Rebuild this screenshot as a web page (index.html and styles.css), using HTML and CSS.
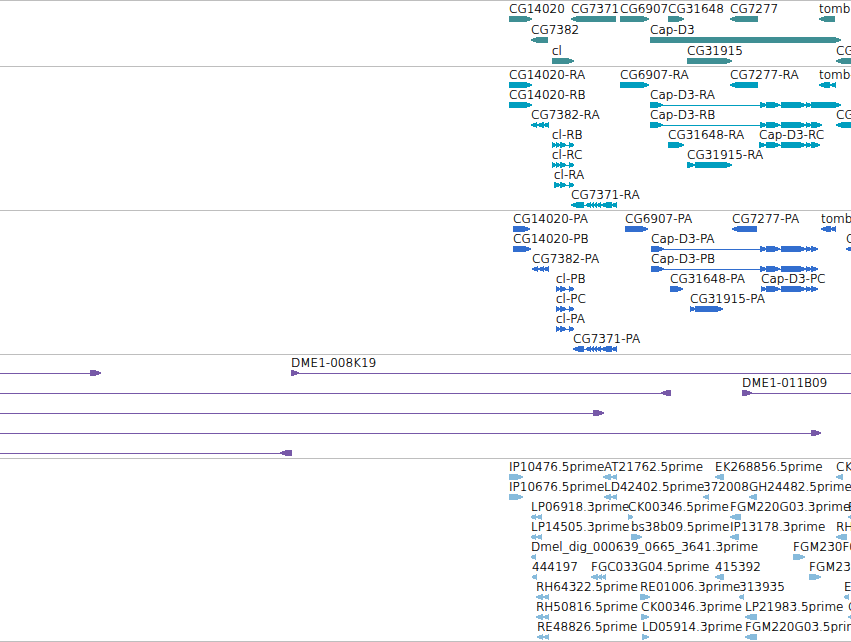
FILE: index.html
```html
<!DOCTYPE html>
<html lang="en">
<head>
    <meta charset="UTF-8">
    <meta name="viewport" content="width=device-width, initial-scale=1.0">
    <title>Genome tracks</title>
    <link rel="stylesheet" href="styles.css">
</head>
<body>
    <main class="browser">
        <section class="track genes" id="genes" aria-label="Genes"></section>
        <section class="track transcripts" id="transcripts" aria-label="Transcripts"></section>
        <section class="track proteins" id="proteins" aria-label="Proteins"></section>
        <section class="track clones" id="clones" aria-label="Clones"></section>
        <section class="track ests" id="ests" aria-label="ESTs"></section>
    </main>
    <script src="script.js"></script>
</body>
</html>
```
FILE: styles.css
```css
body {
    margin: 0;
    background-color: #fff;
    color: #000;
    font-family: "DejaVu Sans", "DejaVu Sans Light", Verdana, sans-serif;
    font-size: 12px;
    font-weight: 200;
    line-height: 14px;
    overflow: hidden;
}
.browser {
    overflow: hidden;
}
.track {
    border-top: 1px solid #bebebe;
    padding: 1px 0 2px;
}
.track:first-child {
    padding-bottom: 1px;
}
.track:last-child {
    padding-bottom: 1px;
    border-bottom: 1px solid #bebebe;
}
.row {
    position: relative;
    height: 20px;
}
.genes .row {
    height: 21px;
}
/* labels sit at their place on the sequence axis */
.label {
    position: absolute;
    top: 0;
    white-space: nowrap;
    text-shadow: 0 0 #000; /* darkens the thin strokes */
}
.glyphs {
    display: block;
    width: 100%;
    height: 20px;
    shape-rendering: crispEdges;
}
.genes {
    fill: #3f8f94;
}
.transcripts {
    fill: #009ebf;
}
.proteins {
    fill: #326ecf;
}
.clones {
    fill: #7759a8;
}
.ests {
    fill: #87bbdc;
}
```
FILE: script.js
```js
const SVG_NS = 'http://www.w3.org/2000/svg';
const TOP = 14;     // top of the glyphs in a row
const HEIGHT = 6;
const END = 2000;   // past the right edge of the view

// [label, start, strand, [[from, to], ...], line from, line to]
const capExons = [[766, 780], [781, 806], [806, 811]];
const cg7371Exons = [[586, 591], [591, 594], [594, 597], [597, 601], [601, 612], [612, 617]];

const tracks = {
    genes: [
        [
            ['CG14020', 509, '+', [[509, 532]]],
            ['CG7371', 571, '-', [[571, 616]]],
            ['CG6907', 620, '+', [[620, 649]]],
            ['CG31648', 668, '+', [[668, 684]]],
            ['CG7277', 730, '-', [[730, 758]]],
            ['tomb', 819, '-', [[819, 835]]]
        ],
        [
            ['CG7382', 531, '-', [[531, 548]]],
            ['Cap-D3', 650, '+', [[650, 841]]]
        ],
        [
            ['cl', 552, '+', [[552, 574]]],
            ['CG31915', 687, '+', [[687, 732]]],
            ['CG', 836, '-', [[836, END]]]
        ]
    ],
    transcripts: [
        [
            ['CG14020-RA', 509, '+', [[509, 532]]],
            ['CG6907-RA', 620, '+', [[620, 649]]],
            ['CG7277-RA', 730, '-', [[730, 758]]],
            ['tomb-RA', 819, '-', [[819, 830], [830, 836]]]
        ],
        [
            ['CG14020-RB', 509, '+', [[509, 532]]],
            ['Cap-D3-RA', 650, '+', [[650, 663], [760, 766], ...capExons, [811, 841]]]
        ],
        [
            ['CG7382-RA', 531, '-', [[531, 537], [537, 544], [544, 549]]],
            ['Cap-D3-RB', 650, '+', [[650, 663], [760, 766], ...capExons, [811, 822]]],
            ['CG', 836, '-', [[836, END]]]
        ],
        [
            ['cl-RB', 552, '+', [[552, 556], [556, 560], [560, 566], [569, 574]]],
            ['CG31648-RA', 668, '+', [[668, 684]]],
            ['Cap-D3-RC', 759, '+', [[759, 766], ...capExons, [811, 820]]]
        ],
        [
            ['cl-RC', 552, '+', [[552, 556], [556, 560], [560, 566], [569, 574]]],
            ['CG31915-RA', 687, '+', [[687, 695], [695, 732]]]
        ],
        [
            ['cl-RA', 554, '+', [[554, 560], [560, 566], [569, 574]]]
        ],
        [
            ['CG7371-RA', 571, '-', [[571, 584], ...cg7371Exons]]
        ]
    ],
    proteins: [
        [
            ['CG14020-PA', 513, '+', [[513, 530]]],
            ['CG6907-PA', 625, '+', [[625, 648]]],
            ['CG7277-PA', 732, '-', [[732, 757]]],
            ['tomb-PA', 821, '-', [[821, 831], [831, 836]]]
        ],
        [
            ['CG14020-PB', 513, '+', [[513, 531]]],
            ['Cap-D3-PA', 651, '+', [[651, 664], [760, 766], ...capExons, [811, 818]]],
            ['CG', 846, '-', [[846, END]]]
        ],
        [
            ['CG7382-PA', 532, '-', [[532, 538], [538, 544], [544, 549]]],
            ['Cap-D3-PB', 651, '+', [[651, 664], [760, 766], ...capExons, [811, 818]]]
        ],
        [
            ['cl-PB', 556, '+', [[556, 560], [560, 566], [569, 574]]],
            ['CG31648-PA', 670, '+', [[670, 683]]],
            ['Cap-D3-PC', 761, '+', [[761, 766], ...capExons, [811, 818]]]
        ],
        [
            ['cl-PC', 556, '+', [[556, 560], [560, 566], [569, 574]]],
            ['CG31915-PA', 690, '+', [[690, 695], [695, 723]]]
        ],
        [
            ['cl-PA', 556, '+', [[556, 560], [560, 566], [569, 574]]]
        ],
        [
            ['CG7371-PA', 573, '-', [[573, 584], ...cg7371Exons]]
        ]
    ],
    clones: [
        [
            ['', 0, '+', [[90, 101]], 0, 90],
            ['DME1-008K19', 291, '+', [[291, 299]], 299, END]
        ],
        [
            ['', 0, '-', [[661, 671]], 0, 661],
            ['DME1-011B09', 742, '+', [[742, 752]], 752, END]
        ],
        [
            ['', 0, '+', [[593, 604]], 0, 593]
        ],
        [
            ['', 0, '+', [[811, 821]], 0, 811]
        ],
        [
            ['', 0, '-', [[280, 292]], 0, 280]
        ]
    ],
    ests: [
        [
            ['IP10476.5prime', 509, '+', [[509, 523]]],
            ['AT21762.5prime', 604, '-', [[603, 611], [611, 617]]],
            ['EK268856.5prime', 715, '-', [[715, 724]]],
            ['CK', 836, '-', [[836, 843]]]
        ],
        [
            ['IP10676.5prime', 509, '+', [[509, 523]]],
            ['LD42402.5prime', 604, '-', [[604, 611], [611, 617]]],
            ['372008', 703, '-', [[703, 709]]],
            ['GH24482.5prime', 749, '-', [[749, 757]]]
        ],
        [
            ['LP06918.3prime', 531, '-', [[531, 536], [536, 542]]],
            ['CK00346.5prime', 628, '+', [[628, 633]]],
            ['FGM220G03.3prime', 730, '-', [[730, 741]]],
            ['E', 848, '-', [[848, END]]]
        ],
        [
            ['LP14505.3prime', 531, '-', [[531, 536], [536, 542]]],
            ['bs38b09.5prime', 631, '+', [[631, 642]]],
            ['IP13178.3prime', 730, '-', [[730, 739]]],
            ['RH', 836, '-', [[836, 847]]]
        ],
        [
            ['Dmel_dig_000639_0665_3641.3prime', 531, '-', [[531, 536]]],
            ['FGM230F0', 793, '+', [[793, 805]]]
        ],
        [
            ['444197', 532, '-', [[532, 537]]],
            ['FGC033G04.5prime', 591, '-', [[591, 598], [598, 602], [602, 606]]],
            ['415392', 715, '-', [[715, 724]]],
            ['FGM23', 809, '+', [[809, 821]]]
        ],
        [
            ['RH64322.5prime', 536, '-', [[536, 543], [543, 549]]],
            ['RE01006.3prime', 640, '+', [[640, 650]]],
            ['313935', 739, '-', [[739, 744]]],
            ['E', 844, '-', [[844, 849]]]
        ],
        [
            ['RH50816.5prime', 536, '-', [[536, 543], [543, 549]]],
            ['CK00346.3prime', 641, '+', [[641, 649]]],
            ['LP21983.5prime', 745, '-', [[745, 757]]],
            ['C', 848, '-', [[848, END]]]
        ],
        [
            ['RE48826.5prime', 537, '-', [[537, 543], [543, 549]]],
            ['LD05914.3prime', 642, '+', [[642, 649]]],
            ['FGM220G03.5prime', 745, '-', [[745, 757]]]
        ]
    ]
};

// box with a pointed end on the side the strand runs to
function arrowPath(from, to, strand) {
    const head = Math.min(7, to - from);
    const tip = strand === '+' ? to : from;
    const back = strand === '+' ? from : to;
    const neck = strand === '+' ? to - head : from + head;
    const mid = (neck + tip) / 2;
    return `M${back} ${TOP}H${neck}L${mid} ${TOP + 1}L${tip} ${TOP + 2}V${TOP + 4}` +
        `L${mid} ${TOP + HEIGHT - 1}L${neck} ${TOP + HEIGHT}H${back}Z`;
}

function addLine(svg, from, to) {
    const line = document.createElementNS(SVG_NS, 'rect');
    line.setAttribute('x', from);
    line.setAttribute('y', TOP + 3);
    line.setAttribute('width', to - from);
    line.setAttribute('height', 1);
    svg.appendChild(line);
}

function drawRow(features) {
    const row = document.createElement('div');
    row.className = 'row';
    const svg = document.createElementNS(SVG_NS, 'svg');
    svg.setAttribute('class', 'glyphs');
    svg.setAttribute('aria-hidden', 'true');

    features.forEach(([name, start, strand, exons, lineFrom, lineTo]) => {
        if (name) {
            const label = document.createElement('span');
            label.className = 'label';
            label.style.left = start + 'px';
            label.textContent = name;
            row.appendChild(label);
        }
        if (lineTo) {
            addLine(svg, lineFrom, lineTo);
        } else if (exons.length > 1) {
            addLine(svg, exons[0][0], exons[exons.length - 1][1]);
        }
        exons.forEach(([from, to]) => {
            const path = document.createElementNS(SVG_NS, 'path');
            path.setAttribute('d', arrowPath(from, to, strand));
            svg.appendChild(path);
        });
    });

    row.appendChild(svg);
    return row;
}

Object.keys(tracks).forEach((id) => {
    const track = document.getElementById(id);
    tracks[id].forEach((features) => track.appendChild(drawRow(features)));
});
```
